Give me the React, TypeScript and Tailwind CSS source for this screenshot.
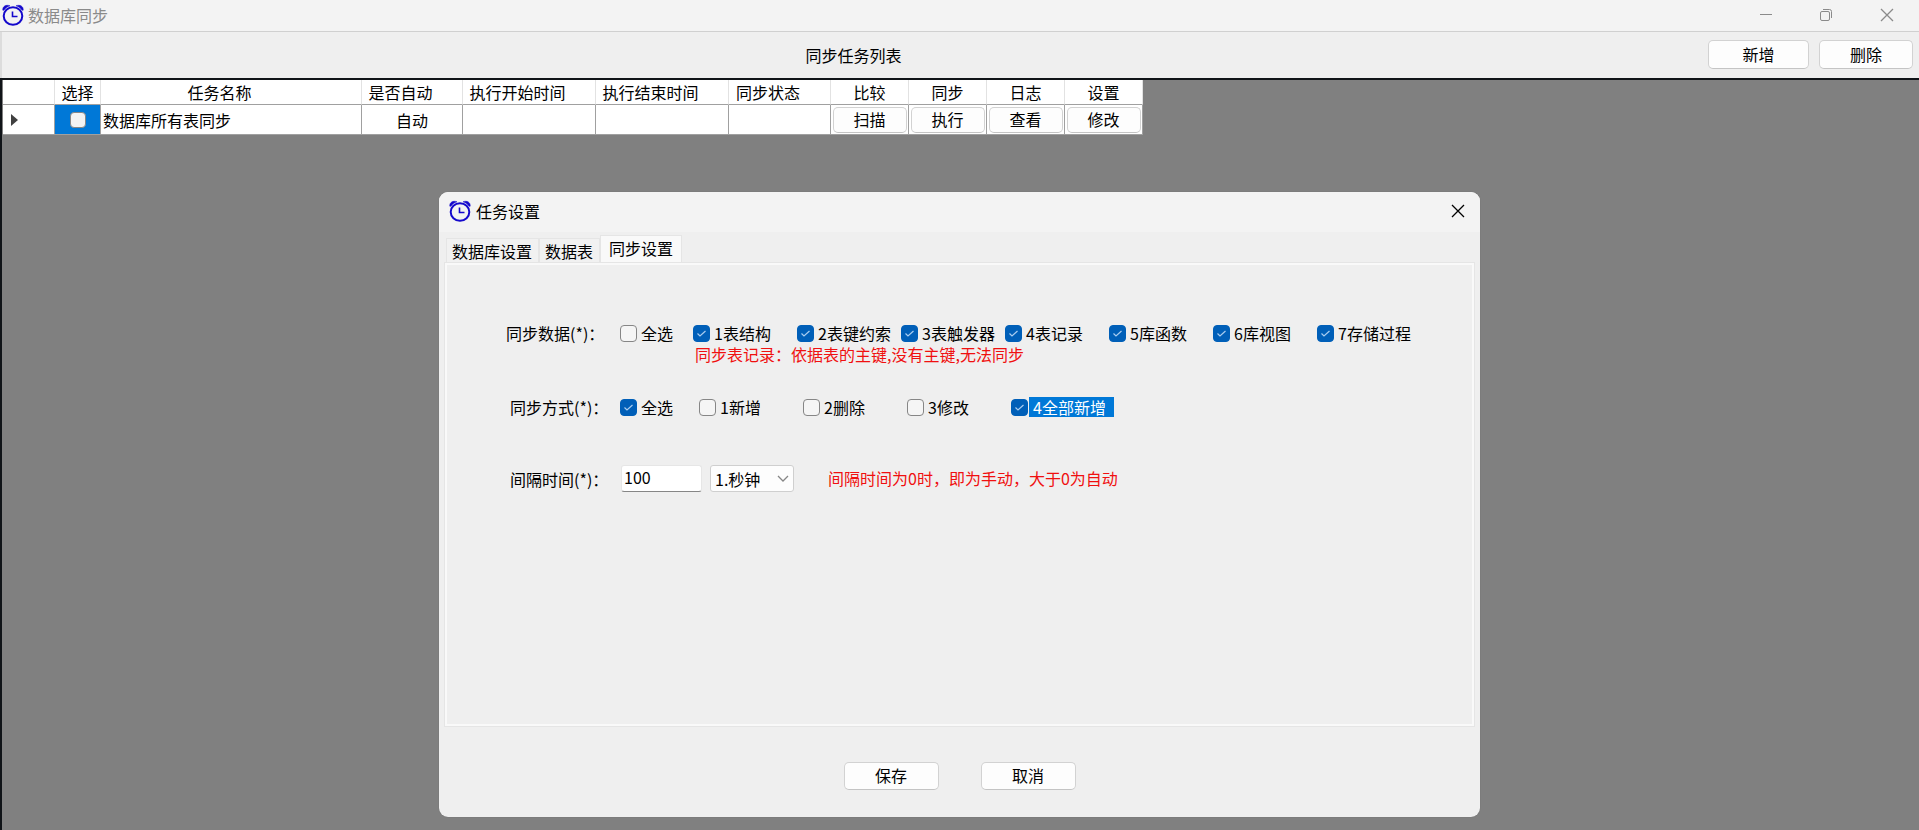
import { useState } from "react";
import type { ReactNode } from "react";

const columns = [
  { title: "", width: "w-[52px]", sortable: false },
  { title: "选择", width: "w-[46px]", sortable: false },
  { title: "任务名称", width: "w-[261px]", sortable: true },
  { title: "是否自动", width: "w-[101px]", sortable: true },
  { title: "执行开始时间", width: "w-[133px]", sortable: true },
  { title: "执行结束时间", width: "w-[133px]", sortable: true },
  { title: "同步状态", width: "w-[102px]", sortable: true },
  { title: "比较", width: "w-[78px]", sortable: false },
  { title: "同步", width: "w-[78px]", sortable: false },
  { title: "日志", width: "w-[78px]", sortable: false },
  { title: "设置", width: "w-[78px]", sortable: false },
];

const rowActions = ["扫描", "执行", "查看", "修改"];

const syncData = [
  "1表结构",
  "2表键约索",
  "3表触发器",
  "4表记录",
  "5库函数",
  "6库视图",
  "7存储过程",
];

const syncModes = [
  { label: "1新增", checked: false },
  { label: "2删除", checked: false },
  { label: "3修改", checked: false },
  { label: "4全部新增", checked: true },
];

const tabs = ["数据库设置", "数据表", "同步设置"];

function AlarmIcon() {
  return (
    <svg viewBox="0 0 22 22" className="size-[22px] shrink-0" fill="none" stroke="#1408cc" aria-hidden="true">
      <ellipse cx="11" cy="12" rx="9.300" ry="8.700" strokeWidth="2" />
      <path d="M10.500 7.500v5h5" strokeWidth="1.600" />
      <path
        d="M.8 6.200C.3 2.500 4 .2 8 1.800C5.500 2.600 3.300 4 2 6.200ZM21.200 6.200C21.700 2.500 18 .2 14 1.800C16.500 2.600 18.700 4 20 6.200Z"
        fill="#1408cc"
        strokeWidth=".5"
      />
    </svg>
  );
}

function CloseIcon() {
  return (
    <svg viewBox="0 0 14 14" className="size-[14px]" fill="none" stroke="currentColor" strokeWidth="1.300" aria-hidden="true">
      <path d="M1 1l12 12M13 1L1 13" />
    </svg>
  );
}

function Button({ children, className = "" }: { children: ReactNode; className?: string }) {
  return (
    <button
      type="button"
      className={`rounded-[5px] border border-[#d2d2d2] border-b-[#c4c4c4] bg-[#fdfdfd] pb-[2px] text-center leading-5 hover:bg-[#e5f1fb] ${className}`}
    >
      {children}
    </button>
  );
}

function Checkbox({
  label,
  defaultChecked = false,
  highlighted = false,
  className = "",
}: {
  label: string;
  defaultChecked?: boolean;
  highlighted?: boolean;
  className?: string;
}) {
  return (
    <label className={`flex items-center whitespace-nowrap ${className}`}>
      <span className="grid shrink-0">
        <input
          type="checkbox"
          defaultChecked={defaultChecked}
          className="peer col-start-1 row-start-1 size-[17px] appearance-none rounded-[4px] border border-[#868686] bg-[#f5f5f5] checked:border-[#005fb8] checked:bg-[#005fb8]"
        />
        <svg
          viewBox="0 0 17 17"
          className="pointer-events-none invisible col-start-1 row-start-1 size-[17px] peer-checked:visible"
          fill="none"
          stroke="#a9cdf0"
          strokeWidth="1.200"
          aria-hidden="true"
        >
          <path d="M4.500 8.500l2.500 2.500 5.500-5" />
        </svg>
      </span>
      <span className={highlighted ? "ml-px bg-[#0078d7] pr-2 pl-1 leading-5 text-white" : "pl-1 leading-5"}>
        {label}
      </span>
    </label>
  );
}

function TaskTable() {
  return (
    <table className="table-fixed border-separate border-spacing-0 bg-white leading-5">
      <thead>
        <tr className="h-[25px]">
          {columns.map((column, index) => (
            <th
              key={index}
              className={`${column.width} border-r border-b border-r-[#e2e2e2] border-b-[#a0a0a0] p-0 text-center font-normal ${column.sortable ? "pr-[23px]" : ""}`}
            >
              {column.title}
            </th>
          ))}
        </tr>
      </thead>
      <tbody>
        <tr className="h-[30px] *:border-r *:border-b *:border-[#a0a0a0] *:p-0">
          <td>
            <svg viewBox="0 0 7 12" className="ml-2 h-3 w-[7px]" fill="#404040" aria-hidden="true">
              <path d="M0 0l7 6-7 6z" />
            </svg>
          </td>
          <td className="bg-[#0078d7]">
            <input
              type="checkbox"
              aria-label="选择"
              className="mx-auto block size-4 appearance-none rounded-[4px] border border-[#868686] bg-[#f3f3f3] checked:bg-[#005fb8]"
            />
          </td>
          <td className="pl-[2px]!">数据库所有表同步</td>
          <td className="text-center">自动</td>
          <td />
          <td />
          <td />
          {rowActions.map((action) => (
            <td key={action}>
              <Button className="mx-auto block h-[26px] w-[74px]">{action}</Button>
            </td>
          ))}
        </tr>
      </tbody>
    </table>
  );
}

function SyncSettings() {
  return (
    <form className="pt-[60px] pl-[61px]">
      <div className="flex items-center">
        <span className="w-[114px] shrink-0 leading-5">同步数据(*)：</span>
        <Checkbox label="全选" className="w-[73px]" />
        {syncData.map((item) => (
          <Checkbox key={item} label={item} defaultChecked className="w-[104px]" />
        ))}
      </div>
      <p className="pl-[189px] leading-[22px] text-[#f01010]">同步表记录：依据表的主键,没有主键,无法同步</p>

      <div className="mt-8 flex items-center pl-1">
        <span className="w-[110px] shrink-0 leading-5">同步方式(*)：</span>
        <Checkbox label="全选" defaultChecked className="w-[79px]" />
        {syncModes.map((mode) => (
          <Checkbox
            key={mode.label}
            label={mode.label}
            defaultChecked={mode.checked}
            highlighted={mode.checked}
            className="w-[104px]"
          />
        ))}
      </div>

      <div className="mt-12 flex items-center pl-1">
        <label htmlFor="interval" className="w-[111px] shrink-0 leading-5">
          间隔时间(*)：
        </label>
        <input
          id="interval"
          type="text"
          defaultValue="100"
          className="h-[27px] w-[81px] rounded-[3px] border border-[#e6e6e6] border-b-[#868686] bg-white px-[2px] pb-1"
        />
        <div className="ml-2 grid items-center">
          <select
            aria-label="时间单位"
            className="col-start-1 row-start-1 h-[27px] w-[84px] appearance-none rounded-[3px] border border-[#cfcfcf] bg-[#fdfdfd] pl-1"
          >
            <option>1.秒钟</option>
            <option>2.分钟</option>
            <option>3.小时</option>
          </select>
          <svg
            viewBox="0 0 12 8"
            className="pointer-events-none col-start-1 row-start-1 mr-[5px] h-2 w-3 justify-self-end"
            fill="none"
            stroke="#868686"
            strokeWidth="1.300"
            aria-hidden="true"
          >
            <path d="M1 1l5 5 5-5" />
          </svg>
        </div>
        <span className="ml-[34px] pb-[2px] leading-5 text-[#f01010]">间隔时间为0时，即为手动，大于0为自动</span>
      </div>
    </form>
  );
}

function TaskDialog() {
  const [activeTab, setActiveTab] = useState("同步设置");

  return (
    <div
      role="dialog"
      aria-label="任务设置"
      className="w-[1041px] max-w-full rounded-[9px] bg-[#efefef] shadow-[0_0_1px_#606060]"
    >
      <header className="flex h-10 items-center rounded-t-[9px] bg-[#f3f3f3] pr-[15px] pb-[2px] pl-[10px]">
        <AlarmIcon />
        <h2 className="ml-[5px] leading-5">任务设置</h2>
        <button type="button" aria-label="关闭" className="ml-auto">
          <CloseIcon />
        </button>
      </header>

      <div className="px-[5px] pt-[3px]">
        <div role="tablist" className="flex items-end pl-[2px]">
          {tabs.map((tab) => (
            <button
              key={tab}
              type="button"
              role="tab"
              aria-selected={tab === activeTab}
              onClick={() => setActiveTab(tab)}
              className={
                tab === activeTab
                  ? "h-[27px] border border-b-0 border-[#e5e5e5] bg-[#f9f9f9] px-2 pb-[2px] leading-5"
                  : "h-6 border border-b-0 border-[#e5e5e5] bg-[#f1f1f1] pr-[6px] pl-[5px] leading-5"
              }
            >
              {tab}
            </button>
          ))}
        </div>
        <div role="tabpanel" className="min-h-[465px] border border-[#e5e5e5] ring-2 ring-[#f9f9f9] ring-inset">
          {activeTab === "同步设置" && <SyncSettings />}
        </div>
      </div>

      <footer className="flex justify-center gap-[42px] pt-[35px] pb-[27px]">
        <Button className="h-7 w-[95px]">保存</Button>
        <Button className="h-7 w-[95px]">取消</Button>
      </footer>
    </div>
  );
}

export default function App() {
  return (
    <div className="relative flex min-h-screen flex-col bg-[#808080] font-['Noto_Sans_CJK_SC',sans-serif] text-base text-black">
      <header className="flex h-8 items-center border-b border-[#d0d0d0] bg-[#f3f3f3] pr-[25px] pb-px pl-[2px] text-[#8a8a8a]">
        <AlarmIcon />
        <h1 className="ml-1 leading-5">数据库同步</h1>
        <div className="ml-auto flex items-center gap-12">
          <button type="button" aria-label="最小化">
            <svg viewBox="0 0 12 12" className="size-3" stroke="currentColor" aria-hidden="true">
              <path d="M0 5.500h12" />
            </svg>
          </button>
          <button type="button" aria-label="还原">
            <svg viewBox="0 0 12 12" className="size-3" fill="none" stroke="currentColor" aria-hidden="true">
              <rect x="0.500" y="2.500" width="9" height="9" rx="1.500" />
              <path d="M3 .5h6.500a2 2 0 0 1 2 2V9" />
            </svg>
          </button>
          <button type="button" aria-label="关闭">
            <CloseIcon />
          </button>
        </div>
      </header>

      <div className="grid h-[46px] grid-cols-[1fr_auto_1fr] items-center border-l-2 border-[#dcdcdc] bg-[#efefef] pr-[6px] pb-px">
        <h2 className="col-start-2 pr-[208px] leading-5">同步任务列表</h2>
        <div className="flex justify-end gap-[10px]">
          <Button className="h-[29px] w-[101px]">新增</Button>
          <Button className="h-[29px] w-[94px]">删除</Button>
        </div>
      </div>

      <main className="flex-1 border-t-2 border-l-2 border-[#101418] pl-px">
        <TaskTable />
      </main>

      <div className="absolute inset-x-0 top-[192px] flex justify-center">
        <TaskDialog />
      </div>
    </div>
  );
}
